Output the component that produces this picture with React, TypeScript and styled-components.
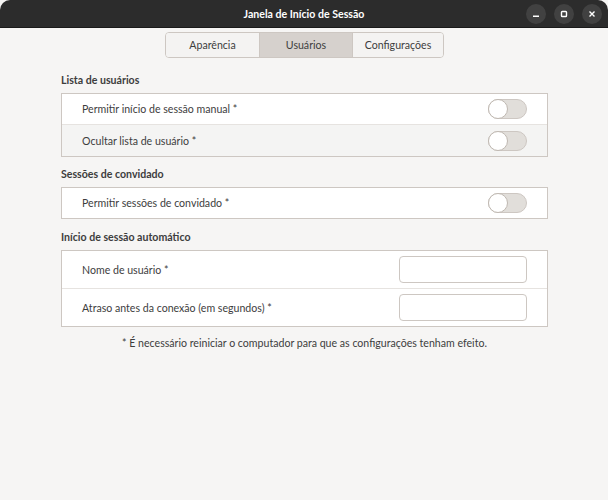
import React from "react";
import styled, { createGlobalStyle } from "styled-components";

const Global = createGlobalStyle`
  html, body { margin: 0; padding: 0; background: #f6f5f4; }
  body { font-family: Lato, "Noto Sans", sans-serif; font-size: 10.6px; color: #3d3d3d; }
  * { box-sizing: border-box; }
`;

const Window = styled.div`
  width: 608px;
  height: 500px;
  background: #f6f5f4;
  display: flex;
  flex-direction: column;
`;

const TitleBar = styled.div`
  height: 28px;
  background: #2c2c2c;
  border-radius: 10px 10px 0 0;
  border-bottom: 1px solid #1a1a1a;
  display: flex;
  align-items: center;
  justify-content: center;
  position: relative;
  flex: none;
`;

const Title = styled.div`
  color: #ffffff;
  font-weight: 700;
  font-size: 10.6px;
`;

const Controls = styled.div`
  position: absolute;
  right: 6px;
  top: 4px;
  display: flex;
  gap: 8px;
`;

const CtlButton = styled.div`
  width: 20px;
  height: 20px;
  border-radius: 50%;
  background: #414141;
  display: flex;
  align-items: center;
  justify-content: center;
`;

const Content = styled.div`
  padding: 4px 60px 0 61px;
  display: flex;
  flex-direction: column;
`;

const Tabs = styled.div`
  align-self: center;
  display: flex;
  margin: 0 0 15px 0;
  border: 1px solid #cdc7c2;
  border-radius: 4px;
  overflow: hidden;
  height: 26px;
`;

const Tab = styled.div<{ $active?: boolean; $first?: boolean; $w: number }>`
  width: ${(p) => p.$w}px;
  display: flex;
  align-items: center;
  justify-content: center;
  background: ${(p) => (p.$active ? "#d6d1cd" : "#f4f3f2")};
  border-left: ${(p) => (p.$first ? "none" : "1px solid #cdc7c2")};
  color: #3d3d3d;
`;

const Heading = styled.div<{ $mt: number }>`
  font-weight: 700;
  height: 14px;
  line-height: 14px;
  margin-top: ${(p) => p.$mt}px;
  margin-bottom: 6px;
`;

const Frame = styled.div`
  width: 487px;
  border: 1px solid #cdc7c2;
  background: #ffffff;
`;

const Row = styled.div<{ $alt?: boolean; $h: number }>`
  height: ${(p) => p.$h}px;
  display: flex;
  align-items: center;
  justify-content: space-between;
  padding: 0 20px 0 20px;
  background: ${(p) => (p.$alt ? "#f4f4f3" : "#ffffff")};
  & + & { border-top: 1px solid #e6e3e0; }
`;

const Label = styled.span`
  color: #3d3d3d;
`;

const Switch = styled.div`
  width: 39px;
  height: 20px;
  border-radius: 10px;
  background: #e1deda;
  border: 1px solid #cdc7c2;
  position: relative;
`;

const Knob = styled.div`
  position: absolute;
  left: -1px;
  top: -1px;
  width: 20px;
  height: 20px;
  border-radius: 50%;
  background: #ffffff;
  border: 1px solid #bfb8b1;
`;

const Entry = styled.div`
  width: 128px;
  height: 27px;
  border: 1px solid #cdc7c2;
  border-radius: 4px;
  background: #ffffff;
`;

const Note = styled.div`
  text-align: center;
  width: 487px;
  margin-top: 10px;
  color: #3d3d3d;
`;

const Toggle = () => (
  <Switch>
    <Knob />
  </Switch>
);

export default function App() {
  return (
    <Window>
      <Global />
      <TitleBar>
        <Title>Janela de Início de Sessão</Title>
        <Controls>
          <CtlButton>
            <svg width="10" height="10" viewBox="0 0 10 10">
              <rect x="2" y="6.5" width="6" height="1.5" fill="#fff" />
            </svg>
          </CtlButton>
          <CtlButton>
            <svg width="10" height="10" viewBox="0 0 10 10">
              <rect x="2.5" y="2.5" width="5" height="5" rx="0.8" fill="none" stroke="#fff" strokeWidth="1.4" />
            </svg>
          </CtlButton>
          <CtlButton>
            <svg width="10" height="10" viewBox="0 0 10 10">
              <path d="M2.5 2.5 L7.5 7.5 M7.5 2.5 L2.5 7.5" stroke="#fff" strokeWidth="1.4" />
            </svg>
          </CtlButton>
        </Controls>
      </TitleBar>
      <Content>
        <Tabs>
          <Tab $w={93} $first>Aparência</Tab>
          <Tab $w={93} $active>Usuários</Tab>
          <Tab $w={91}>Configurações</Tab>
        </Tabs>
        <Heading $mt={0}>Lista de usuários</Heading>
        <Frame>
          <Row $h={30}>
            <Label>Permitir início de sessão manual *</Label>
            <Toggle />
          </Row>
          <Row $h={32} $alt>
            <Label>Ocultar lista de usuário *</Label>
            <Toggle />
          </Row>
        </Frame>
        <Heading $mt={10}>Sessões de convidado</Heading>
        <Frame>
          <Row $h={30}>
            <Label>Permitir sessões de convidado *</Label>
            <Toggle />
          </Row>
        </Frame>
        <Heading $mt={11}>Início de sessão automático</Heading>
        <Frame>
          <Row $h={37}>
            <Label>Nome de usuário *</Label>
            <Entry />
          </Row>
          <Row $h={38}>
            <Label>Atraso antes da conexão (em segundos) *</Label>
            <Entry />
          </Row>
        </Frame>
        <Note>* É necessário reiniciar o computador para que as configurações tenham efeito.</Note>
      </Content>
    </Window>
  );
}
